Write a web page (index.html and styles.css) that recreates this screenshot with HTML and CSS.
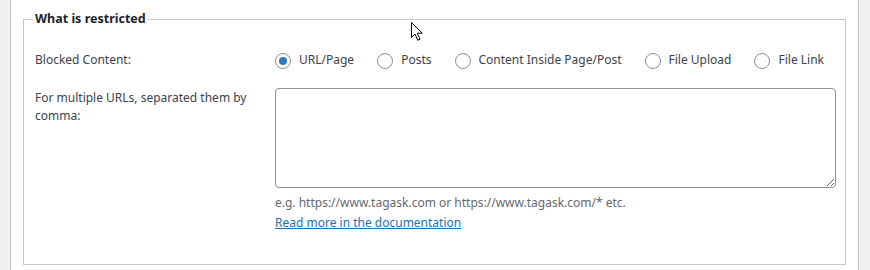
FILE: index.html
```html
<!DOCTYPE html>
<html>
<head>
<meta charset="utf-8">
<link rel="stylesheet" href="styles.css">
</head>
<body>
<div class="panel">
  <fieldset class="box">
    <legend class="box-title">What is restricted</legend>
    <div class="row row-radios">
      <div class="label">Blocked Content:</div>
      <div class="field radios">
        <label class="opt"><span class="radio checked"></span>URL/Page</label>
        <label class="opt"><span class="radio"></span>Posts</label>
        <label class="opt"><span class="radio"></span>Content Inside Page/Post</label>
        <label class="opt"><span class="radio"></span>File Upload</label>
        <label class="opt"><span class="radio"></span>File Link</label>
      </div>
    </div>
    <div class="row row-urls">
      <div class="label label-top">For multiple URLs, separated them by comma:</div>
      <div class="field">
        <textarea class="urls"></textarea>
        <p class="desc">e.g. https://www.tagask.com or https://www.tagask.com/* etc.</p>
        <a class="doc-link" href="#">Read more in the documentation</a>
      </div>
    </div>
  </fieldset>
</div>
<svg class="cursor" width="14" height="21" viewBox="0 0 14 21">
  <path d="M1.5 1.5 L1.5 16.5 L5 13 L7.8 19.3 L10 18.3 L7.3 12.2 L12.2 12.2 Z" fill="#fff" stroke="#000" stroke-width="1" stroke-linejoin="miter"/>
</svg>
</body>
</html>
```
FILE: styles.css
```css
html, body {
  margin: 0;
  padding: 0;
}
body {
  background: #f0f0f1;
  font-family: "Noto Sans", "Open Sans", sans-serif;
  font-size: 12px;
  line-height: 18px;
  color: #3c434a;
  height: 270px;
  overflow: hidden;
  position: relative;
}
.panel {
  margin-left: 10px;
  width: 849px;
  height: 280px;
  background: #fff;
  border-left: 1px solid #c3c4c7;
  border-right: 1px solid #c3c4c7;
  padding: 10px 12px 0 12px;
  box-sizing: border-box;
}
.box {
  margin: 0;
  border: 1px solid #c8c9cc;
  padding: 23px 9px 32px 11px;
  min-width: 0;
}
.box-title {
  font-weight: 700;
  font-size: 12.5px;
  color: #1d2327;
  padding: 0 2px;
  margin-left: -2px;
  line-height: 18px;
}
.row {
  display: flex;
}
.row-urls {
  margin-top: 19px;
}
.label {
  width: 240px;
  flex: none;
  padding-right: 10px;
  box-sizing: border-box;
}
.label-top {
  padding-top: 1px;
}
.field {
  flex: 1;
  min-width: 0;
}
.radios {
  display: flex;
  align-items: center;
  gap: 23px;
  height: 18px;
}
.opt {
  display: flex;
  align-items: center;
  gap: 8px;
  white-space: nowrap;
}
.radio {
  width: 16px;
  height: 16px;
  box-sizing: border-box;
  border: 1px solid #8c8f94;
  border-radius: 50%;
  display: flex;
  align-items: center;
  justify-content: center;
  margin-top: 2px;
}
.radio.checked::after {
  content: "";
  width: 8px;
  height: 8px;
  border-radius: 50%;
  background: #2f7bc0;
}
.urls {
  display: block;
  width: 561px;
  height: 100px;
  box-sizing: border-box;
  border: 1px solid #8c8f94;
  border-radius: 4px;
  margin: 0;
  padding: 2px 6px;
  font: inherit;
  background: #fff;
}
.desc {
  margin: 6px 0 2px 0;
  color: #646970;
}
.doc-link {
  color: #2271b1;
  text-decoration: underline;
}
.cursor {
  position: absolute;
  left: 410px;
  top: 21px;
}
```
